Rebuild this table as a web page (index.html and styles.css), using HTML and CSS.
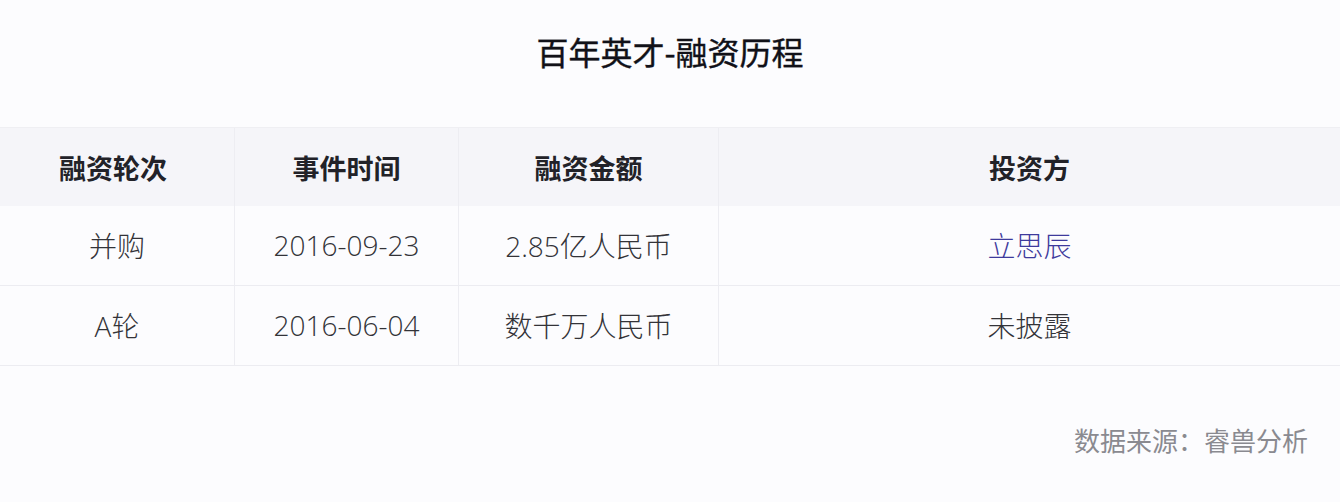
FILE: index.html
```html
<!DOCTYPE html>
<html lang="zh">
<head>
<meta charset="utf-8">
<link rel="stylesheet" href="styles.css">
</head>
<body>
<div class="page">
  <h1 class="title">百年英才-融资历程</h1>
  <div class="table">
    <div class="row head">
      <div class="cell">融资轮次</div>
      <div class="cell">事件时间</div>
      <div class="cell">融资金额</div>
      <div class="cell">投资方</div>
    </div>
    <div class="row">
      <div class="cell">并购</div>
      <div class="cell">2016-09-23</div>
      <div class="cell">2.85亿人民币</div>
      <div class="cell"><span class="link">立思辰</span></div>
    </div>
    <div class="row">
      <div class="cell">A轮</div>
      <div class="cell">2016-06-04</div>
      <div class="cell">数千万人民币</div>
      <div class="cell">未披露</div>
    </div>
  </div>
  <div class="source">数据来源：睿兽分析</div>
</div>
</body>
</html>
```
FILE: styles.css
```css
html, body {
  margin: 0;
  padding: 0;
  background: #fcfcfe;
}
.page {
  width: 1340px;
  height: 502px;
  font-family: "Open Sans", "Noto Sans CJK SC", sans-serif;
  color: #333338;
  display: flex;
  flex-direction: column;
}
.title {
  margin: 0;
  height: 127px;
  box-sizing: border-box;
  padding-top: 29px;
  font-family: "Noto Sans CJK SC", sans-serif;
  font-size: 32px;
  line-height: 44px;
  font-weight: 400;
  text-align: center;
  color: #111118;
  -webkit-text-stroke: 0.4px #111118;
}
.table {
  display: flex;
  flex-direction: column;
  border-top: 1px solid #efeff3;
}
.row {
  display: grid;
  grid-template-columns: 235px 224px 260px 1fr;
  height: 80px;
  border-bottom: 1px solid #ececf1;
  box-sizing: border-box;
  font-size: 28px;
  font-weight: 300;
}
.row.head {
  height: 78px;
  background: #f5f5f9;
  border-bottom: none;
  font-size: 27px;
  font-weight: 700;
  color: #222228;
}
.cell {
  display: flex;
  align-items: center;
  justify-content: center;
  border-right: 1px solid #ededf2;
}
.head .cell:first-child {
  padding-right: 8px;
}
.cell:last-child {
  border-right: none;
}
.row:not(.head) .cell {
  padding-bottom: 2px;
}
.link {
  color: #3e3a9c;
}
.source {
  text-align: right;
  padding-right: 32px;
  padding-top: 56px;
  font-family: "Noto Sans CJK SC", sans-serif;
  font-size: 26px;
  line-height: 36px;
  color: #8a8a90;
}
```
